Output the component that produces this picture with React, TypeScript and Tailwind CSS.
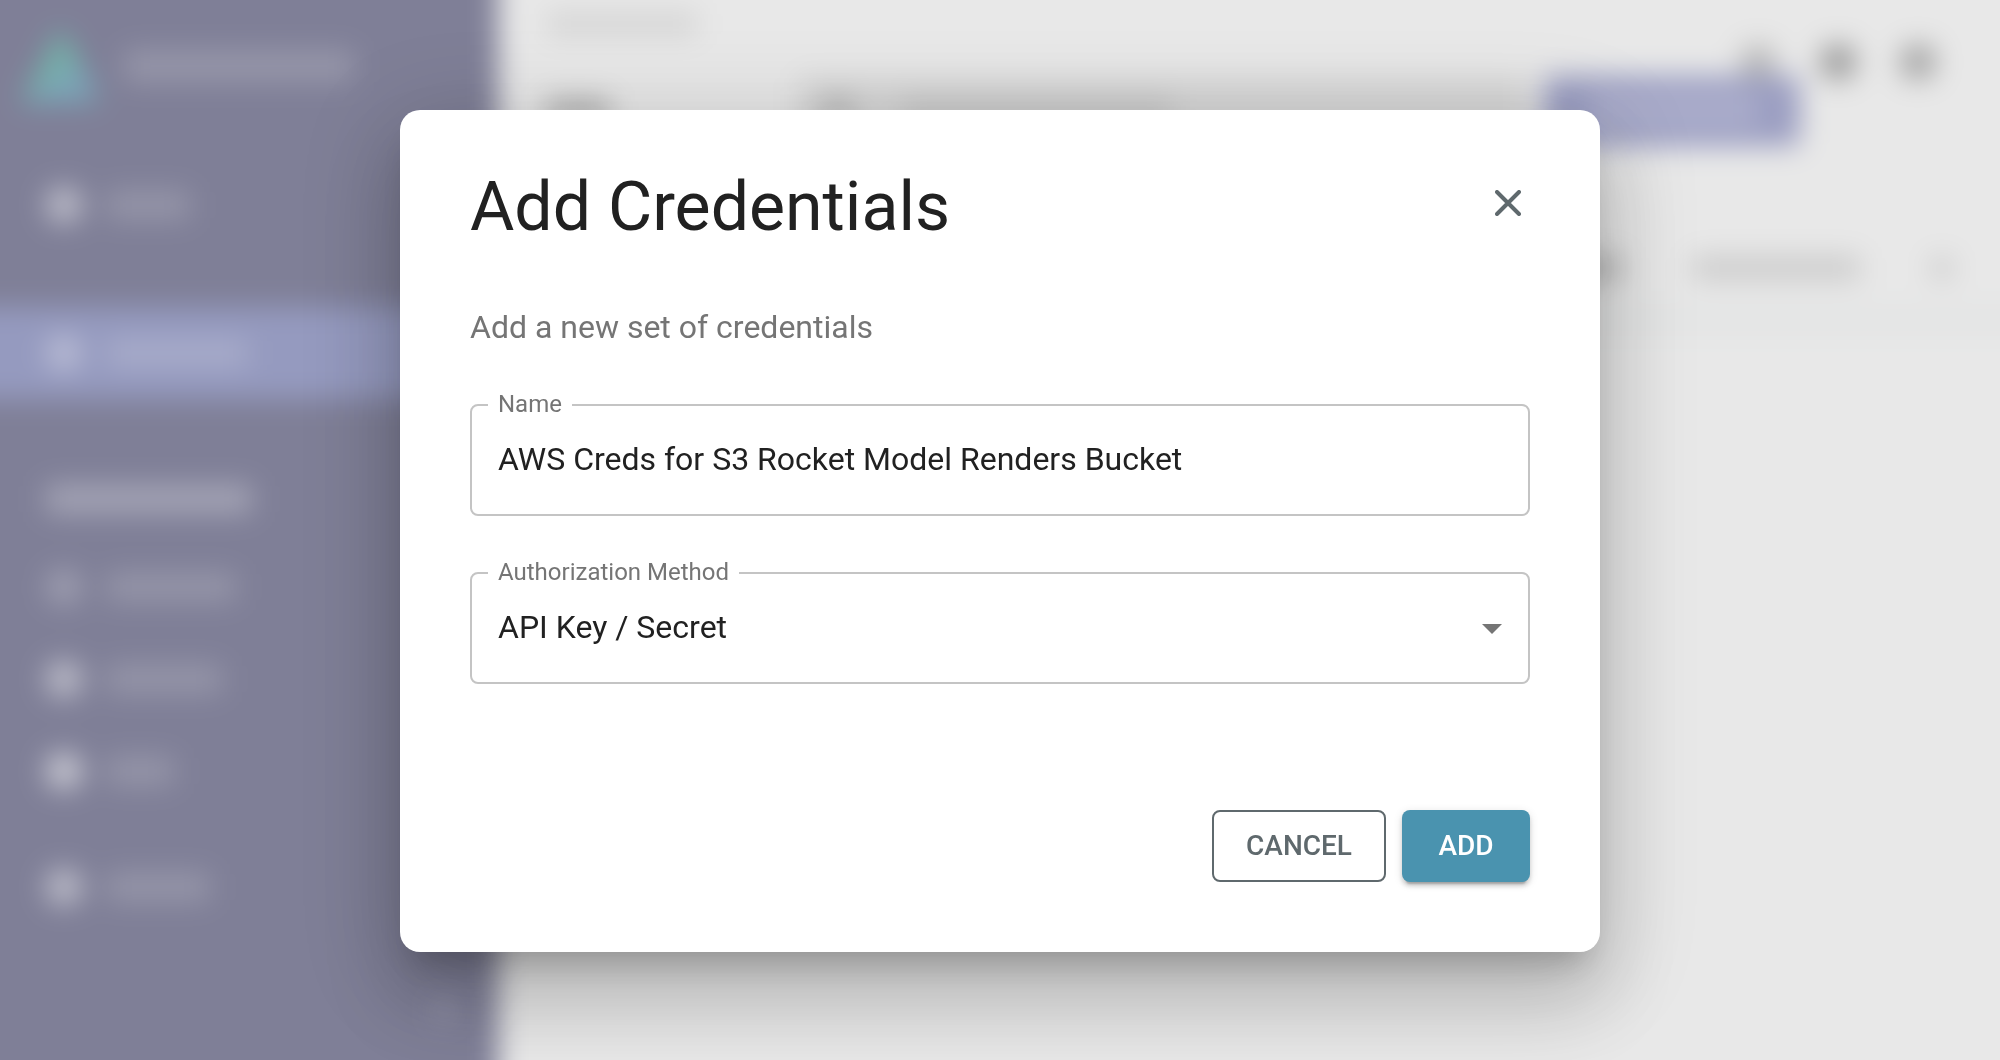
import { useState } from "react";

type NavRow = { icon: string; bar: string; active?: boolean };

const primaryRows: NavRow[] = [
  { icon: "bg-white/50", bar: "w-[84px]" },
  { icon: "bg-white/35", bar: "w-[142px]", active: true },
];

const sectionRows: NavRow[] = [
  { icon: "bg-white/25", bar: "w-[130px]" },
  { icon: "bg-white/50", bar: "w-[116px]" },
  { icon: "bg-white/60", bar: "w-[68px]" },
];

function NavItem({ row }: { row: NavRow }) {
  return (
    <div
      className={`flex h-[92px] items-center gap-6 pl-[94px] ${row.active ? "bg-[#959abf]" : ""}`}
    >
      <span className={`size-9 rounded-full ${row.icon}`} />
      <span className={`h-7 rounded bg-white/18 ${row.bar}`} />
    </div>
  );
}

function Sidebar() {
  return (
    <aside className="flex w-[546px] shrink-0 flex-col bg-[#7f7f97] pt-12">
      <div className="flex h-[132px] items-center gap-6 pl-[68px]">
        <svg viewBox="0 0 80 80" className="size-20" aria-hidden="true">
          <path d="M40 2 L62 38 L30 58 L0 78 Z" fill="#74b0a8" />
          <path d="M62 38 L80 76 L0 78 L34 54 Z" fill="#7ba5b8" />
        </svg>
        <span className="h-8 w-[230px] rounded bg-white/18" />
      </div>
      <div className="flex flex-col gap-14 pt-[27px]">
        {primaryRows.map((row, i) => (
          <NavItem key={i} row={row} />
        ))}
      </div>
      <div className="pt-[86px] pl-[94px]">
        <div className="h-7 w-[206px] rounded bg-white/30" />
      </div>
      <div className="pt-7">
        {sectionRows.map((row, i) => (
          <NavItem key={i} row={row} />
        ))}
      </div>
      <div className="pt-6">
        <NavItem row={{ icon: "bg-white/50", bar: "w-[104px]" }} />
      </div>
      <div className="flex justify-end pt-[68px] pr-11">
        <span className="size-5 rounded-full bg-white/25" />
      </div>
    </aside>
  );
}

function Content() {
  return (
    <main className="relative flex grow flex-col bg-[#e8e8e8] pt-12 pr-12">
      <div className="px-12 pt-3">
        <div className="h-6 w-[152px] rounded bg-black/8" />
      </div>
      <div className="flex items-center pt-10 pr-[200px] pl-12">
        <div className="h-6 w-[64px] rounded bg-black/25" />
        <div className="ml-[188px] flex h-[68px] grow items-center gap-12 rounded-lg bg-black/7 px-6">
          <span className="size-8 rounded-full bg-black/15" />
          <span className="h-6 w-[270px] rounded bg-black/8" />
        </div>
        <div className="ml-4 h-[70px] w-[256px] rounded-lg bg-[#9a9dc1] p-5">
          <div className="ml-6 h-7 w-[170px] rounded bg-white/20" />
        </div>
      </div>
      <div className="absolute top-[92px] right-28 flex gap-11">
        <span className="size-9 rounded-full bg-black/20" />
        <span className="size-9 rounded-full bg-black/35" />
        <span className="size-9 rounded-full bg-black/30" />
      </div>
      <div className="flex h-[134px] items-end justify-end gap-[70px] pr-[46px]">
        <span className="h-6 w-[130px] rounded bg-black/20" />
        <span className="h-6 w-[168px] rounded bg-black/12" />
        <span className="size-6 rounded-full bg-black/12" />
      </div>
      <div className="mt-6 -mr-12 h-8 bg-[#e4e5e5]" />
    </main>
  );
}

const labelClass =
  "pointer-events-none absolute -top-3.5 left-4 bg-white px-2.5 text-[24px] leading-6 text-[#757575]";
const fieldClass =
  "relative h-28 rounded-lg border-2 border-[#c4c4c4] focus-within:border-[#4a93af]";
const controlClass =
  "size-full appearance-none bg-transparent px-[26px] pb-0.5 text-[32px] text-[#212121] outline-none";

export default function App() {
  const [name, setName] = useState("AWS Creds for S3 Rocket Model Renders Bucket");
  const [method, setMethod] = useState("API Key / Secret");

  return (
    <div className="relative min-h-screen overflow-hidden font-['Roboto',sans-serif]">
      {/* The backdrop bleeds past the window so the blur has no faded rim. */}
      <div className="fixed -inset-12 flex blur-[14px]" aria-hidden="true">
        <Sidebar />
        <Content />
      </div>

      <div className="fixed inset-0 flex items-center justify-center pt-0.5">
        <form
          role="dialog"
          aria-modal="true"
          aria-labelledby="dialog-title"
          onSubmit={(e) => e.preventDefault()}
          className="w-full max-w-[1200px] rounded-[20px] bg-white px-[70px] pt-[57px] pb-[70px] shadow-[0_22px_30px_-14px_rgba(0,0,0,0.2),0_48px_76px_6px_rgba(0,0,0,0.14),0_18px_92px_16px_rgba(0,0,0,0.12)]"
        >
          <header className="flex items-start justify-between">
            <h1 id="dialog-title" className="text-[68px] leading-20 text-[#212121]">
              Add Credentials
            </h1>
            <button
              type="button"
              aria-label="Close"
              className="mt-3.5 flex size-11 items-center justify-center rounded-full text-[#5f696d]"
            >
              <svg
                viewBox="0 0 26 26"
                className="size-[26px]"
                fill="none"
                stroke="currentColor"
                strokeWidth="4"
                strokeLinecap="round"
              >
                <path d="M2 2 L24 24 M24 2 L2 24" />
              </svg>
            </button>
          </header>

          <p className="mt-14 text-[32px] leading-12 text-[#757575]">
            Add a new set of credentials
          </p>

          <div className="mt-[53px] flex flex-col gap-14">
            <div className={fieldClass}>
              <label htmlFor="cred-name" className={labelClass}>
                Name
              </label>
              <input
                id="cred-name"
                type="text"
                value={name}
                onChange={(e) => setName(e.target.value)}
                className={controlClass}
              />
            </div>
            <div className={fieldClass}>
              <label htmlFor="cred-method" className={labelClass}>
                Authorization Method
              </label>
              <select
                id="cred-method"
                value={method}
                onChange={(e) => setMethod(e.target.value)}
                className={controlClass}
              >
                <option>API Key / Secret</option>
              </select>
              <svg
                viewBox="0 0 20 10"
                aria-hidden="true"
                className="pointer-events-none absolute top-[50px] right-[26px] h-2.5 w-5"
              >
                <path d="M0 0 H20 L10 10 Z" fill="#757575" />
              </svg>
            </div>
          </div>

          <footer className="mt-[126px] flex justify-end gap-4 text-[28px] font-medium">
            <button
              type="button"
              className="h-[72px] w-[174px] rounded-lg border-2 border-[#5f696d] text-[#5f696d]"
            >
              CANCEL
            </button>
            <button
              type="submit"
              className="h-[72px] w-32 rounded-lg bg-[#4a93af] text-white shadow-[0_6px_2px_-4px_rgba(0,0,0,0.2),0_4px_4px_0_rgba(0,0,0,0.14),0_2px_10px_0_rgba(0,0,0,0.12)]"
            >
              ADD
            </button>
          </footer>
        </form>
      </div>
    </div>
  );
}
